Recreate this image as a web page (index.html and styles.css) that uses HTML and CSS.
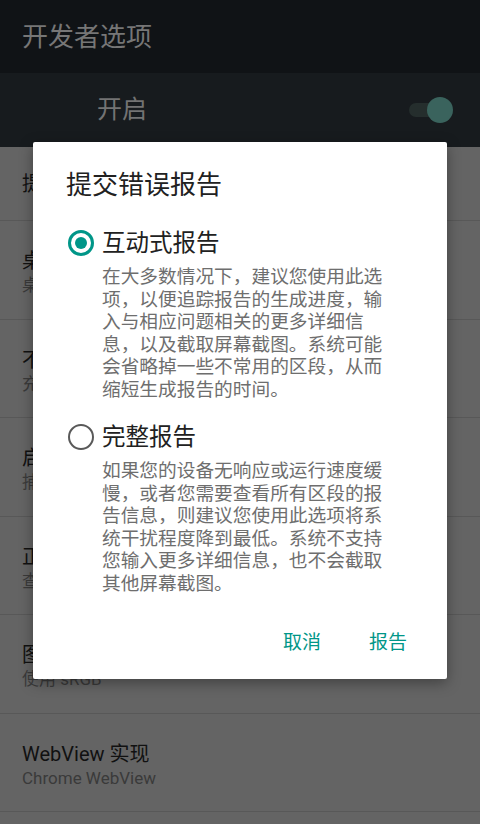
FILE: index.html
```html
<!DOCTYPE html>
<html lang="zh-CN">
<head>
    <meta charset="UTF-8">
    <meta name="viewport" content="width=device-width, initial-scale=1.0">
    <title>开发者选项</title>
    <link rel="stylesheet" href="styles.css">
</head>
<body>

<div class="screen">
    <header class="appbar">
        <h1>开发者选项</h1>
    </header>

    <div class="master">
        <span class="master-label">开启</span>
        <div class="switch">
            <span class="track"></span>
            <span class="thumb"></span>
        </div>
    </div>

    <ul class="settings">
        <li class="single"><div class="title">提交错误报告</div></li>
        <li>
            <div class="title">桌面备份密码</div>
            <div class="summary">桌面完整备份当前未设置密码保护</div>
        </li>
        <li>
            <div class="title">不锁定屏幕</div>
            <div class="summary">充电时屏幕不会休眠</div>
        </li>
        <li>
            <div class="title">启用蓝牙 HCI 信息收集日志</div>
            <div class="summary">捕获单个文件中的所有蓝牙 HCI 数据包</div>
        </li>
        <li>
            <div class="title">正在运行的服务</div>
            <div class="summary">查看和控制当前正在运行的服务</div>
        </li>
        <li>
            <div class="title">图片颜色模式</div>
            <div class="summary">使用 sRGB</div>
        </li>
        <li>
            <div class="title">WebView 实现</div>
            <div class="summary">Chrome WebView</div>
        </li>
    </ul>

    <!-- Bug report dialog -->
    <div class="dialog">
        <h2 class="dialog-title">提交错误报告</h2>

        <label class="option">
            <input type="radio" name="report" checked>
            <span class="radio"></span>
            <span class="option-label">互动式报告</span>
            <span class="option-desc">在大多数情况下，建议您使用此选项，以便追踪报告的生成进度，输入与相应问题相关的更多详细信息，以及截取屏幕截图。系统可能会省略掉一些不常用的区段，从而缩短生成报告的时间。</span>
        </label>

        <label class="option">
            <input type="radio" name="report">
            <span class="radio"></span>
            <span class="option-label">完整报告</span>
            <span class="option-desc">如果您的设备无响应或运行速度缓慢，或者您需要查看所有区段的报告信息，则建议您使用此选项将系统干扰程度降到最低。系统不支持您输入更多详细信息，也不会截取其他屏幕截图。</span>
        </label>

        <div class="actions">
            <button class="text-btn">取消</button>
            <button class="text-btn">报告</button>
        </div>
    </div>
</div>

</body>
</html>
```

FILE: styles.css
```css
body {
    margin: 0;
    padding: 0;
    background-color: #646464;
    font-family: Roboto, "Noto Sans CJK SC", sans-serif;
}

.screen {
    position: relative;
    width: 480px;
    height: 824px;
    overflow: hidden;
    background-color: #646464;
}

.appbar {
    height: 73px;
    background-color: #101316;
    display: flex;
    align-items: center;
    padding-left: 22px;
}

.appbar h1 {
    margin: 0;
    font-size: 26px;
    font-weight: normal;
    line-height: 34px;
    color: #767676;
}

.master {
    height: 74px;
    background-color: #171b1e;
    display: flex;
    align-items: center;
    justify-content: space-between;
    padding: 0 27px 0 97px;
}

.master-label {
    font-size: 25px;
    line-height: 34px;
    color: #737373;
}

.switch {
    position: relative;
    width: 44px;
    height: 26px;
}

.switch .track {
    position: absolute;
    left: 0;
    top: 6px;
    width: 36px;
    height: 14px;
    border-radius: 7px;
    background-color: #252e2d;
}

.switch .thumb {
    position: absolute;
    right: 0;
    top: 0;
    width: 26px;
    height: 26px;
    border-radius: 50%;
    background-color: #3a635d;
}

.settings {
    margin: 0;
    padding: 0;
    list-style-type: none;
}

.settings li {
    box-sizing: border-box;
    height: 98.5px;
    padding: 27px 22px 0;
    border-bottom: 1px solid #585858;
    white-space: nowrap;
}

.settings li.single {
    height: 74px;
    padding-top: 0;
    display: flex;
    align-items: center;
}

.title {
    font-size: 20px;
    line-height: 26px;
    color: #111;
}

.summary {
    margin-top: 0;
    font-size: 17px;
    line-height: 22px;
    color: #3a3a3a;
}

.dialog {
    position: absolute;
    left: 33px;
    top: 142px;
    width: 414px;
    box-sizing: border-box;
    padding: 26px 28px 16px 33px;
    background-color: #fff;
    border-radius: 2px;
    box-shadow: 0 4px 14px rgba(0, 0, 0, 0.35);
}

.dialog-title {
    margin: 0;
    font-size: 26px;
    font-weight: normal;
    line-height: 34px;
    color: #212121;
}

.option {
    display: grid;
    grid-template-columns: 30px 288px;
    column-gap: 6px;
    align-items: center;
    margin-top: 26px;
    cursor: pointer;
}

.option + .option {
    margin-top: 21px;
}

.option input {
    display: none;
}

.radio {
    box-sizing: border-box;
    width: 26px;
    height: 26px;
    margin-left: 2px;
    border: 2.5px solid #595959;
    border-radius: 50%;
    display: flex;
    align-items: center;
    justify-content: center;
}

.option input:checked + .radio {
    border: 3.5px solid #009688;
}

.option input:checked + .radio::after {
    content: "";
    width: 12px;
    height: 12px;
    border-radius: 50%;
    background-color: #009688;
}

.option-label {
    font-size: 23.5px;
    line-height: 30px;
    color: #212121;
}

.option-desc {
    grid-column: 2;
    margin-top: 8px;
    font-size: 18.7px;
    line-height: 22.5px;
    color: #6e6e6e;
}

.actions {
    display: flex;
    justify-content: flex-end;
    gap: 24px;
    margin-top: 28px;
}

.text-btn {
    background: none;
    border: none;
    padding: 8px 12px;
    font-family: inherit;
    font-size: 19px;
    line-height: 24px;
    color: #009688;
    cursor: pointer;
}
```
